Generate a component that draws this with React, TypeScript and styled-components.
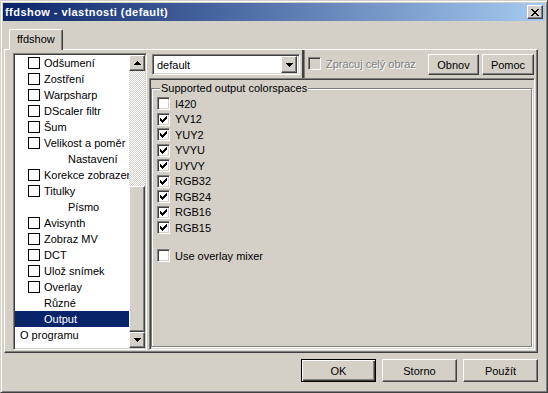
import React from 'react';
import styled, { createGlobalStyle, css } from 'styled-components';

const face = '#d4d0c8';

const GlobalStyle = createGlobalStyle`
  html, body { margin: 0; padding: 0; background: ${face}; }
  body {
    font-family: "Liberation Sans", Arial, sans-serif;
    font-size: 11px;
    color: #000;
  }
  * { box-sizing: border-box; }
`;

const raised = css`
  border: 1px solid;
  border-color: #fff #404040 #404040 #fff;
  box-shadow: inset -1px -1px #808080;
  background: ${face};
`;

const sunken = css`
  border: 1px solid;
  border-color: #808080 #fff #fff #808080;
  box-shadow: inset 1px 1px #404040, inset -1px -1px ${face};
`;

const Window = styled.div`
  width: 548px;
  height: 393px;
  background: ${face};
  border: 1px solid;
  border-color: ${face} #404040 #404040 ${face};
  box-shadow: inset 1px 1px #fff, inset -1px -1px #808080;
  padding: 2px;
  display: flex;
  flex-direction: column;
`;

const TitleBar = styled.div`
  height: 18px;
  flex: none;
  display: flex;
  align-items: center;
  padding: 0 2px 0 2px;
  background: linear-gradient(to right, #0a246a, #a6caf0);
`;

const Title = styled.div`
  flex: 1;
  color: #fff;
  font-weight: bold;
  font-size: 11px;
  letter-spacing: 0.45px;
  white-space: nowrap;
`;

const CloseButton = styled.div`
  ${raised};
  width: 16px;
  height: 14px;
  display: flex;
  align-items: center;
  justify-content: center;
  padding-right: 1px;
`;

const Body = styled.div`
  flex: 1;
  display: flex;
  flex-direction: column;
  padding: 8px 7px 9px 1px;
`;

const TabStrip = styled.div`
  display: flex;
  padding-left: 5px;
  height: 20px;
  flex: none;
`;

const Tab = styled.div`
  position: relative;
  z-index: 1;
  height: 21px;
  padding: 3px 7px 0 7px;
  background: ${face};
  border: 1px solid;
  border-color: #fff #404040 transparent #fff;
  border-bottom: none;
  border-radius: 2px 2px 0 0;
  box-shadow: inset -1px 0 #808080;
`;

const Panel = styled.div`
  height: 304px;
  flex: none;
  border: 1px solid;
  border-color: #fff #404040 #404040 #fff;
  box-shadow: inset -1px -1px #808080;
  display: flex;
  gap: 2px;
  padding: 3px 2px 2px 8px;
`;

const Tree = styled.div`
  ${sunken};
  width: 134px;
  background: #fff;
  display: flex;
  padding: 1px;
`;

const TreeList = styled.div`
  flex: 1;
  display: flex;
  flex-direction: column;
  overflow: hidden;
`;

const TreeRow = styled.div<{ $indent: number; $selected?: boolean }>`
  height: 16px;
  flex: none;
  display: flex;
  align-items: center;
  gap: 4px;
  padding-left: ${(p) => p.$indent}px;
  white-space: nowrap;
  background: ${(p) => (p.$selected ? '#0a246a' : 'transparent')};
  color: ${(p) => (p.$selected ? '#fff' : '#000')};
`;

const TreeBox = styled.span`
  width: 12px;
  height: 12px;
  flex: none;
  border: 1px solid #000;
  background: #fff;
`;

const ScrollBar = styled.div`
  width: 16px;
  display: flex;
  flex-direction: column;
`;

const ScrollButton = styled.div`
  ${raised};
  height: 16px;
  flex: none;
  display: flex;
  align-items: center;
  justify-content: center;
`;

const ScrollTrack = styled.div<{ $h: number }>`
  height: ${(p) => p.$h}px;
  flex: none;
  background-color: #fff;
  background-image: repeating-conic-gradient(${face} 0% 25%, #fff 0% 50%);
  background-size: 2px 2px;
`;

const ScrollThumb = styled.div`
  ${raised};
  flex: 1;
`;

const RightColumn = styled.div`
  flex: 1;
  display: flex;
  flex-direction: column;
`;

const TopRow = styled.div`
  height: 25px;
  flex: none;
  display: flex;
  align-items: flex-start;
`;

const Combo = styled.div`
  ${sunken};
  width: 148px;
  height: 21px;
  margin: 1px 0 0 3px;
  background: #fff;
  display: flex;
  align-items: center;
  padding: 2px;
`;

const ComboText = styled.span`
  flex: 1;
  padding-left: 2px;
`;

const DropButton = styled.div`
  ${raised};
  width: 16px;
  height: 17px;
  display: flex;
  align-items: center;
  justify-content: center;
`;

const Separator = styled.div`
  width: 2px;
  height: 28px;
  margin: -3px 0 0 2px;
  background: #404040;
  box-shadow: 1px 0 #808080;
`;

const Check = styled.label<{ $disabled?: boolean }>`
  display: flex;
  align-items: center;
  gap: 5px;
  white-space: nowrap;
  color: ${(p) => (p.$disabled ? '#808080' : '#000')};
  text-shadow: ${(p) => (p.$disabled ? '1px 1px #fff' : 'none')};
`;

const Box = styled.span<{ $disabled?: boolean }>`
  ${sunken};
  width: 13px;
  height: 13px;
  flex: none;
  background: ${(p) => (p.$disabled ? face : '#fff')};
  display: flex;
  align-items: center;
  justify-content: center;
`;

const DisabledCheck = styled(Check)`
  margin: 4px 0 0 4px;
  flex: 1;
`;

const Button = styled.div<{ $w: number; $h?: number; $default?: boolean }>`
  ${raised};
  width: ${(p) => p.$w}px;
  height: ${(p) => p.$h ?? 21}px;
  display: flex;
  align-items: center;
  justify-content: center;
  ${(p) =>
    p.$default &&
    css`
      border-color: #000;
      box-shadow: inset 1px 1px #fff, inset -1px -1px #404040, inset -2px -2px #808080;
    `}
`;

const TopButtons = styled.div`
  display: flex;
  gap: 3px;
  margin: 1px 1px 0 0;
`;

const PageFrame = styled.div`
  ${sunken};
  flex: 1;
  display: flex;
  padding: 9px 2px 2px 1px;
`;

const GroupBox = styled.div`
  position: relative;
  flex: 1;
  border: 1px solid #808080;
  box-shadow: inset 1px 1px #fff, 1px 1px #fff;
  padding: 7px 5px 0 5px;
  display: flex;
  flex-direction: column;
`;

const GroupLabel = styled.span`
  position: absolute;
  top: -7px;
  left: 8px;
  padding: 0 1px;
  background: ${face};
`;

const OptionRow = styled.div<{ $gap?: number }>`
  height: 15.5px;
  flex: none;
  display: flex;
  align-items: center;
  margin-top: ${(p) => p.$gap ?? 0}px;
`;

const Footer = styled.div`
  display: flex;
  justify-content: flex-end;
  gap: 6px;
  margin-top: 6px;
`;

const Triangle = ({ up }: { up?: boolean }) => (
  <svg width="7" height="4" viewBox="0 0 7 4" shapeRendering="crispEdges">
    {[7, 5, 3, 1].map((w, i) => (
      <rect key={i} x={(7 - w) / 2} y={up ? 3 - i : i} width={w} height={1} fill="#000" />
    ))}
  </svg>
);

const CheckMark = () => (
  <svg width="7" height="7" viewBox="0 0 7 7" shapeRendering="crispEdges">
    {[2, 3, 4, 3, 2, 1, 0].map((y, x) => (
      <rect key={x} x={x} y={y} width={1} height={3} fill="#000" />
    ))}
  </svg>
);

const CloseGlyph = () => (
  <svg width="8" height="7" viewBox="0 0 8 7" shapeRendering="crispEdges">
    {[0, 1, 2, 3, 4, 5, 6].map((y) => {
      const d = y <= 3 ? y : 6 - y;
      return (
        <g key={y} fill="#000">
          <rect x={d} y={y} width={2} height={1} />
          <rect x={6 - d} y={y} width={2} height={1} />
        </g>
      );
    })}
  </svg>
);

type TreeItem = { label: string; indent: number; check?: boolean; selected?: boolean };

const treeItems: TreeItem[] = [
  { label: 'Odšumení', indent: 13, check: true },
  { label: 'Zostření', indent: 13, check: true },
  { label: 'Warpsharp', indent: 13, check: true },
  { label: 'DScaler filtr', indent: 13, check: true },
  { label: 'Šum', indent: 13, check: true },
  { label: 'Velikost a poměr', indent: 13, check: true },
  { label: 'Nastavení', indent: 53 },
  { label: 'Korekce zobrazeni', indent: 13, check: true },
  { label: 'Titulky', indent: 13, check: true },
  { label: 'Písmo', indent: 53 },
  { label: 'Avisynth', indent: 13, check: true },
  { label: 'Zobraz MV', indent: 13, check: true },
  { label: 'DCT', indent: 13, check: true },
  { label: 'Ulož snímek', indent: 13, check: true },
  { label: 'Overlay', indent: 13, check: true },
  { label: 'Různé', indent: 29 },
  { label: 'Output', indent: 29, selected: true },
  { label: 'O programu', indent: 5 },
];

const colorspaces = [
  { name: 'I420', on: false },
  { name: 'YV12', on: true },
  { name: 'YUY2', on: true },
  { name: 'YVYU', on: true },
  { name: 'UYVY', on: true },
  { name: 'RGB32', on: true },
  { name: 'RGB24', on: true },
  { name: 'RGB16', on: true },
  { name: 'RGB15', on: true },
];

export default function App() {
  return (
    <>
      <GlobalStyle />
      <Window>
        <TitleBar>
          <Title>ffdshow - vlastnosti (default)</Title>
          <CloseButton>
            <CloseGlyph />
          </CloseButton>
        </TitleBar>
        <Body>
          <TabStrip>
            <Tab>ffdshow</Tab>
          </TabStrip>
          <Panel>
            <Tree>
              <TreeList>
                {treeItems.map((it) => (
                  <TreeRow key={it.label} $indent={it.indent} $selected={it.selected}>
                    {it.check && <TreeBox />}
                    <span>{it.label}</span>
                  </TreeRow>
                ))}
              </TreeList>
              <ScrollBar>
                <ScrollButton>
                  <Triangle up />
                </ScrollButton>
                <ScrollTrack $h={115} />
                <ScrollThumb />
                <ScrollButton>
                  <Triangle />
                </ScrollButton>
              </ScrollBar>
            </Tree>
            <RightColumn>
              <TopRow>
                <Combo>
                  <ComboText>default</ComboText>
                  <DropButton>
                    <Triangle />
                  </DropButton>
                </Combo>
                <Separator />
                <DisabledCheck $disabled>
                  <Box $disabled />
                  Zpracuj celý obraz
                </DisabledCheck>
                <TopButtons>
                  <Button $w={51}>Obnov</Button>
                  <Button $w={52}>Pomoc</Button>
                </TopButtons>
              </TopRow>
              <PageFrame>
                <GroupBox>
                  <GroupLabel>Supported output colorspaces</GroupLabel>
                  {colorspaces.map((c) => (
                    <OptionRow key={c.name}>
                      <Check>
                        <Box>{c.on && <CheckMark />}</Box>
                        {c.name}
                      </Check>
                    </OptionRow>
                  ))}
                  <OptionRow $gap={12.5}>
                    <Check>
                      <Box />
                      Use overlay mixer
                    </Check>
                  </OptionRow>
                </GroupBox>
              </PageFrame>
            </RightColumn>
          </Panel>
          <Footer>
            <Button $w={75} $h={23} $default>
              OK
            </Button>
            <Button $w={75} $h={23}>
              Storno
            </Button>
            <Button $w={75} $h={23}>
              Použít
            </Button>
          </Footer>
        </Body>
      </Window>
    </>
  );
}
